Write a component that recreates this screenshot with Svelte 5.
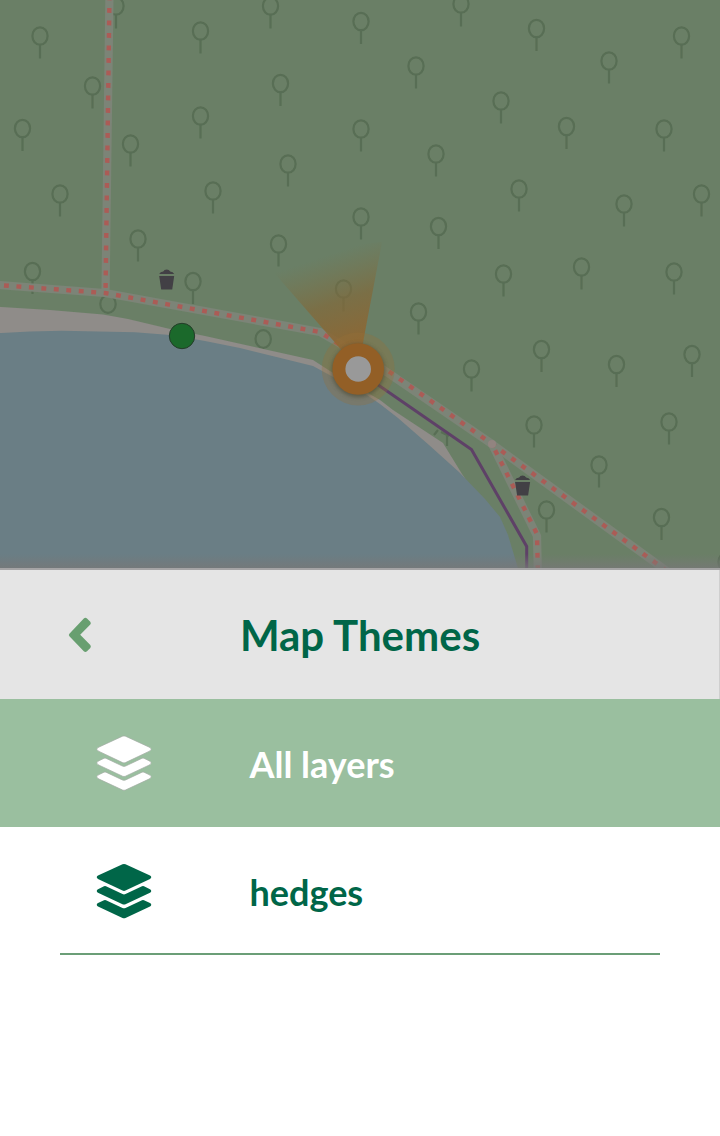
<script>
  const trees = [
    [116, 6], [40, 36], [92.5, 86], [22.5, 128.5], [130.5, 144], [60, 194], [138, 239], [32.5, 271.5],
    [200.5, 31], [270.5, 6], [280.5, 83.5], [200.5, 116], [288, 164], [213, 191], [278.5, 244],
    [193, 281.5], [361, 21.5], [361, 129], [361, 217], [343.5, 289], [461, 4], [536.5, 28.5],
    [416, 66], [501, 101], [609, 61], [681.5, 36], [566.5, 126.5], [664, 129], [436, 154],
    [519, 189], [624, 204], [701.5, 194], [438.5, 226.5], [503.5, 274], [581.5, 267], [674, 272],
    [418.5, 312], [541.5, 349.5], [471.5, 369], [616.5, 364.5], [692, 354.5], [534, 425],
    [669, 422], [599, 465], [546.5, 510], [661.5, 517.5], [726, 562]
  ];
  const bins = [[166.7, 279], [522.6, 485]];
  const themes = ['All layers', 'hedges'];
  let selected = $state(0);
</script>

<main>
  <svg class="map" viewBox="0 0 720 568">
    <defs>
      <linearGradient id="beam" gradientUnits="userSpaceOnUse" x1="358" y1="345" x2="328" y2="255">
        <stop offset="0" stop-color="#91652f" stop-opacity="0.92" />
        <stop offset="0.5" stop-color="#806a3c" stop-opacity="0.75" />
        <stop offset="1" stop-color="#7c7044" stop-opacity="0" />
      </linearGradient>
      <linearGradient id="edge" x1="0" y1="0" x2="0" y2="1">
        <stop offset="0" stop-color="#777" stop-opacity="0" />
        <stop offset="1" stop-color="#777" stop-opacity="0.75" />
      </linearGradient>
      <filter id="soft" x="-30%" y="-30%" width="160%" height="160%"><feGaussianBlur stdDeviation="2" /></filter>
      <filter id="tile" filterUnits="userSpaceOnUse" x="-10" y="-10" width="740" height="590"><feGaussianBlur stdDeviation="0.7" /></filter>
    </defs>
    <rect width="720" height="568" fill="#6a7f66" />
    <g filter="url(#tile)">
      <g fill="none" stroke="#586e54" stroke-width="2.200">
        {#each trees as [x, y]}
          <ellipse cx={x} cy={y} rx="7.6" ry="8.7" />
          <path d="M{x} {y + 9}v13.5" />
        {/each}
        <ellipse cx="108" cy="304" rx="7.7" ry="8.8" />
        <ellipse cx="263.2" cy="339" rx="7.7" ry="8.8" />
        <path d="M434 435l4-5M441 432l8 4M447 436v10" />
      </g>
      <path fill="#8f8c89" d="M-8 306.500L50 310L103 314.500L128 319L170 329L205 336L250 346L313 360L330 371L380 400L393 410L443 443L462 474L480 500L420 480L-8 340Z" />
      <path fill="#6a7e85" d="M-8 333.500L30 331.500L62 330.800L135 332.300L170 335L205 341L240 348L313 366L335 378L367 395L380 404L398 418L429 445L459 472L485 499L500 517L508 535L520 575H-8Z" />
      <g fill="none" stroke="#7c8477" stroke-width="8.200" stroke-linejoin="round">
        <path d="M109.500 -8L105.500 293" />
        <path d="M-8 284.500L105 293L320 332L375 364L492 444L675 577" />
        <path d="M492 444L537 536L538 578" />
      </g>
      <g fill="none" stroke="#ab5c57" stroke-width="4.400" stroke-dasharray="4.900 7.600">
        <path d="M109.500 -4.500L105.500 293" />
        <path d="M-8.500 284.500L105 293L320 332L359 357" />
        <path d="M389 371.500L492 444L675 577" />
        <path d="M492 444L537 534L538 578" stroke-dashoffset="-7" />
      </g>
      <circle cx="492" cy="444" r="4" fill="#928480" />
      <g fill="#424044">
        {#each bins as [x, y]}
          <path d="M{x - 7.5} {y - 5}q1-2.500 4-2.500q1-2 3.500-2t3.500 2q3 0 4 2.500zM{x - 7.5} {y - 3}h15l-2 13.500h-11z" />
        {/each}
      </g>
    </g>
    <path d="M358 369L270 268Q320 246 382 242Z" fill="url(#beam)" />
    <path d="M358 371L471.500 449.500L526.700 546.500V568" fill="none" stroke="#5e4167" stroke-width="3" />
    <circle cx="358.200" cy="369" r="36.500" fill="#966f38" opacity="0.32" />
    <circle cx="358.200" cy="370.500" r="26.500" fill="#4c4b35" opacity="0.7" filter="url(#soft)" />
    <circle cx="358.200" cy="369" r="19.300" fill="#999" stroke="#935f26" stroke-width="13" />
    <circle cx="182" cy="336" r="12.700" fill="#1b692b" stroke="#253c29" stroke-width="1" />
    <rect y="554" width="720" height="14" fill="url(#edge)" />
  </svg>

  <header>
    <button class="back" aria-label="Back">
      <svg width="24" height="36" viewBox="0 0 24 36"><path d="M1.400 16.800L15.800 1.500Q17.400 .2 19 1.500L22.300 4.800Q23.400 6.200 22.300 7.600L12.200 17.800L22.300 28Q23.400 29.500 22.300 31L19 34.300Q17.400 35.500 15.800 34.300L1.400 19.200Q.3 18 1.400 16.800Z" fill="#689f70" /></svg>
    </button>
    <h1>Map Themes</h1>
  </header>

  <div class="themes">
    {#each themes as theme, i}
      <button class="theme" class:selected={selected === i} onclick={() => (selected = i)}>
        <svg class="layers" width="56" height="56" viewBox="0 0 56 56">
          <path d="M26.500 1.200Q28 .6 29.500 1.200L54 12.500Q56.500 14.200 54 15.900L29.500 27.600Q28 28.300 26.500 27.600L2 15.900Q-.5 14.200 2 12.500Z" />
          <path d="M8 23.300Q9 22.900 10 23.300L26.500 31.100Q28 31.700 29.500 31.100L46 23.300Q47 22.900 48 23.300L54 26.200Q56.500 27.900 54 29.700L29.500 41.200Q28 41.900 26.500 41.200L2 29.700Q-.5 27.900 2 26.200Z" />
          <path d="M8 37.200Q9 36.800 10 37.200L26.500 45Q28 45.600 29.500 45L46 37.200Q47 36.800 48 37.200L54 40.100Q56.500 41.800 54 43.600L29.500 55Q28 55.700 26.500 55L2 43.600Q-.5 41.800 2 40.100Z" />
        </svg>
        <span>{theme}</span>
      </button>
    {/each}
  </div>
</main>

<style>
  :global(body) { margin: 0; background: #fff; }
  main { width: 720px; height: 1136px; overflow: hidden; background: #fff; font-family: Lato, sans-serif; color: #006648; }
  .map { display: block; width: 720px; height: 568px; }
  header {
    box-sizing: border-box;
    display: grid;
    grid-template-columns: 120px 1fr 120px;
    align-items: center;
    height: 131px;
    background: linear-gradient(#cfcfcf, #cfcfcf) right / 1px 100% no-repeat #e5e5e5;
    border-top: 2px solid #a5a4a5;
  }
  button { border: 0; padding: 0; background: none; font: inherit; color: inherit; }
  .back { display: flex; padding-left: 68px; }
  h1 { margin: 0; text-align: center; font-size: 42px; line-height: 52px; font-weight: 700; }
  .theme {
    display: grid;
    grid-template-columns: 153px 1fr;
    align-items: center;
    box-sizing: border-box;
    width: 600px;
    height: 128px;
    margin: 0 60px;
    padding-top: 3px;
    border-bottom: 2px solid #6b9e77;
    text-align: left;
    font-size: 36px;
    font-weight: 700;
  }
  .theme.selected { width: 720px; margin: 0; padding-left: 60px; background: #9abf9f; border-bottom-color: #9abf9f; color: #fff; }
  .theme span { padding-left: 36.500px; }
  .layers { margin: 0 0 1.500px 36px; fill: currentColor; }
  .selected .layers { stroke: #a1aaa2; stroke-width: 0.7; }
</style>
